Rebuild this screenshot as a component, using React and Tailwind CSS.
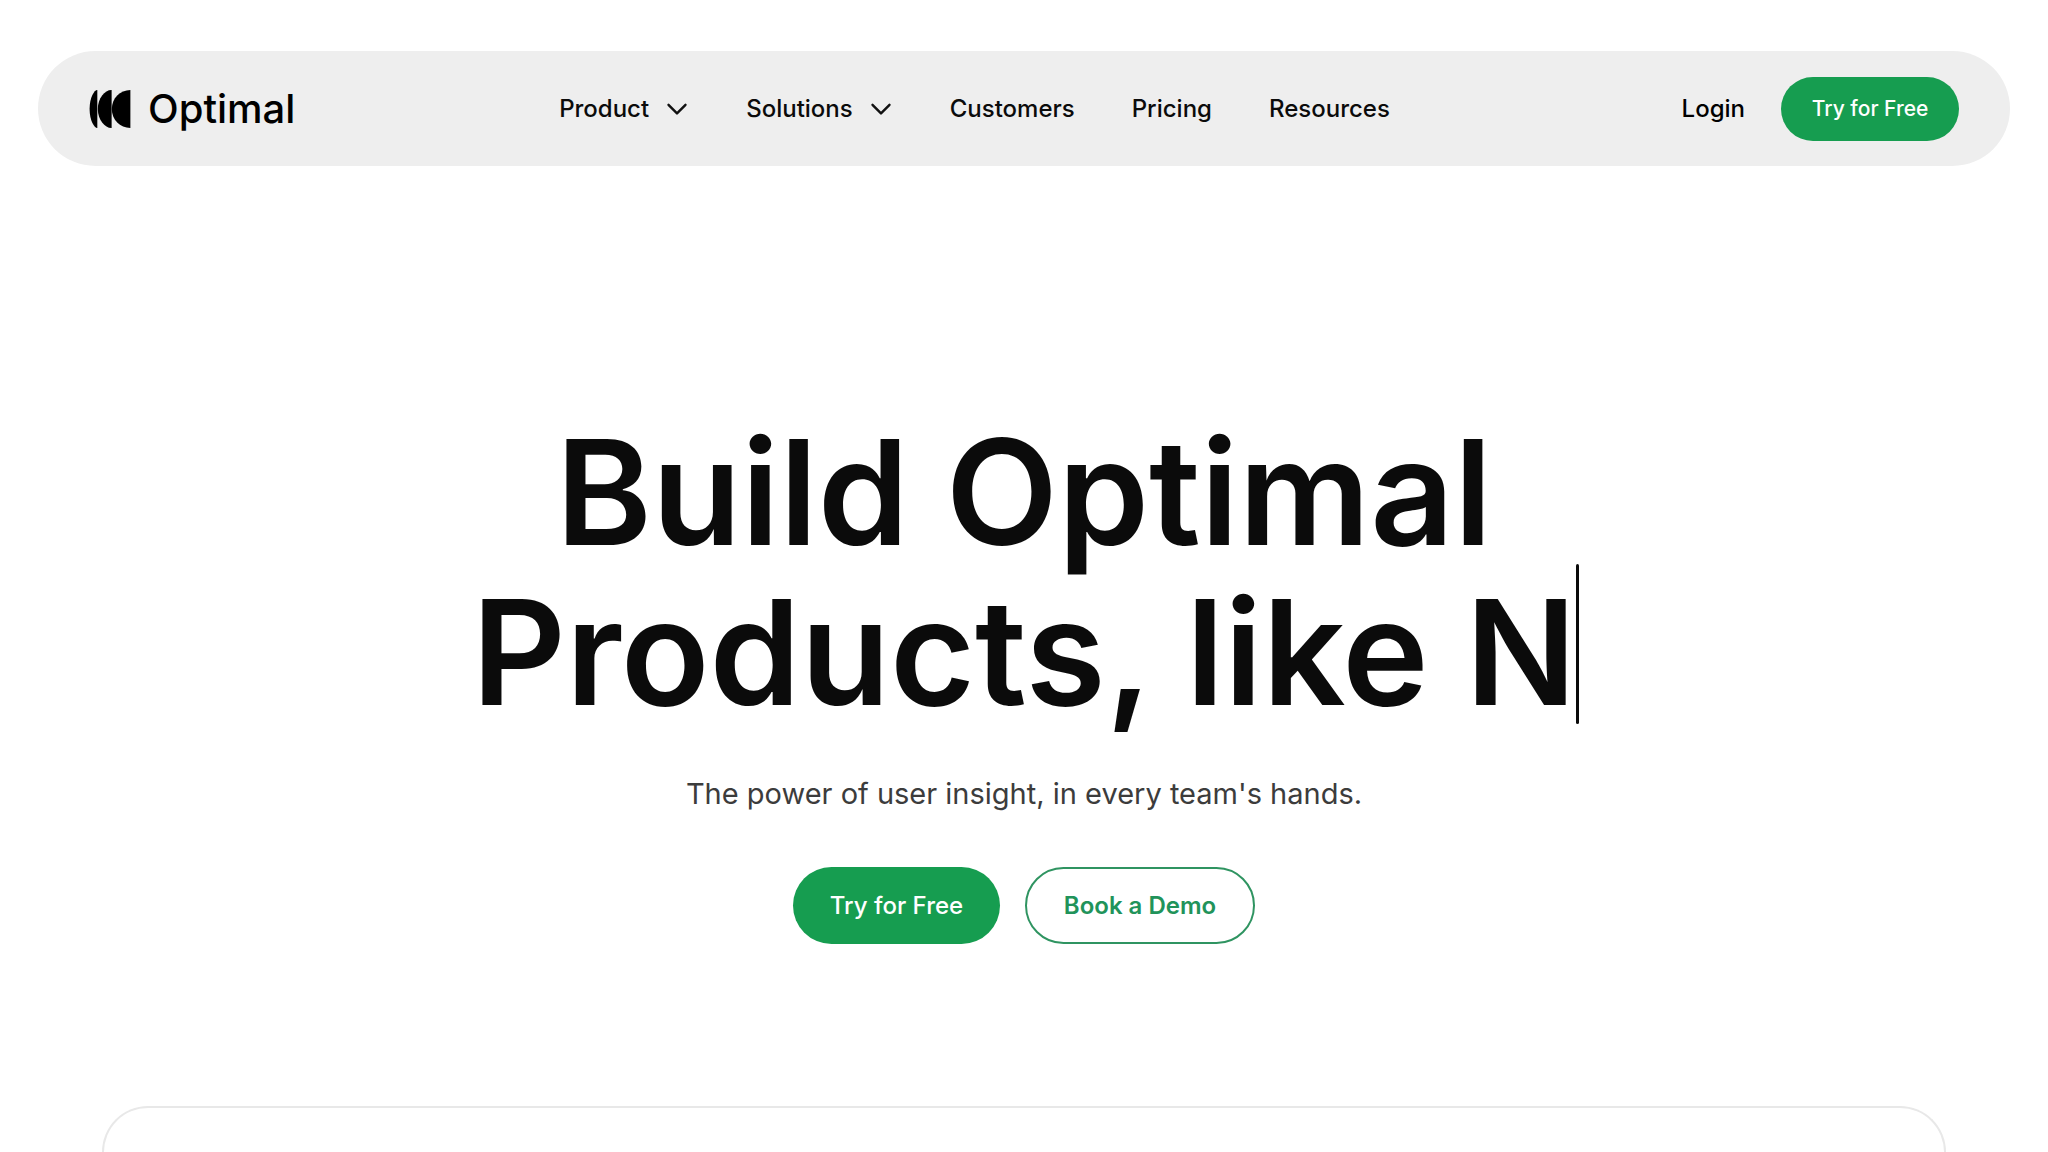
import React from "react";

const navItem = "flex items-center gap-4 text-2xl font-medium whitespace-nowrap";

function Chevron() {
  return (
    <svg viewBox="0 0 24 24" className="size-6" fill="none" stroke="#111" strokeWidth="2.4" strokeLinecap="round" strokeLinejoin="round" aria-hidden="true">
      <path d="M3.5 7.8 L12 16.4 L20.5 7.8" />
    </svg>
  );
}

function Logo() {
  return (
    <a href="#" className="flex items-center gap-[17px] text-black">
      <svg viewBox="0 0 42 40" className="h-10 w-[42px]" fill="currentColor" aria-hidden="true">
        <path d="M8.3 1 C5.6 .8 .6 8 .6 20 C.6 32 5.6 39.2 8.3 39 Z" />
        <path d="M22.6 1 C16 .8 8.8 9 8.8 20 C8.8 31 16 39.2 22.6 39 Z" />
        <path d="M41.4 1 C31 1 22.8 9.5 22.8 20 C22.8 30.5 31 39 41.4 39 Z" />
      </svg>
      <span className="text-[40px] leading-10 font-medium">Optimal</span>
    </a>
  );
}

export default function App() {
  return (
    <div className="flex min-h-screen flex-col bg-white font-['Inter',sans-serif] text-[#0b0b0b]">
      <header className="mx-[38px] mt-[51px] flex h-[115px] shrink-0 items-center justify-between rounded-full bg-[#eeeeee] px-[51px]">
        <Logo />
        <nav className="flex items-center gap-[57px]">
          <button className={navItem}>Product <Chevron /></button>
          <button className={navItem}>Solutions <Chevron /></button>
          <a href="#" className={navItem}>Customers</a>
          <a href="#" className={navItem}>Pricing</a>
          <a href="#" className={navItem}>Resources</a>
        </nav>
        <div className="flex items-center gap-9 pl-7">
          <a href="#" className={navItem + " text-black"}>Login</a>
          <button className="h-16 w-[178px] rounded-full bg-[#169d50] text-[21px] font-medium text-white">Try for Free</button>
        </div>
      </header>
      <main className="flex grow flex-col items-center pt-[246px]">
        <h1 className="text-center text-[146px] leading-[160px] font-semibold">
          Build Optimal<br />
          Products, like <span className="relative">N<span className="absolute top-0 left-full h-40 w-[3px] rounded-full bg-[#0b0b0b]" /></span>
        </h1>
        <p className="mt-10 text-[29px] leading-11 text-[#3c3c3c]">The power of user insight, in every team's hands.</p>
        <div className="mt-[51px] flex gap-[25px]">
          <button className="h-[77px] w-[207px] rounded-full bg-[#169d50] text-2xl font-medium text-white">Try for Free</button>
          <button className="h-[77px] w-[230px] rounded-full border-2 border-[#2f9461] text-2xl font-semibold text-[#21935a]">Book a Demo</button>
        </div>
        <section className="mt-[162px] w-[90%] grow rounded-t-[48px] border-2 border-b-0 border-[#e8e8e8]" aria-label="Product preview" />
      </main>
    </div>
  );
}
